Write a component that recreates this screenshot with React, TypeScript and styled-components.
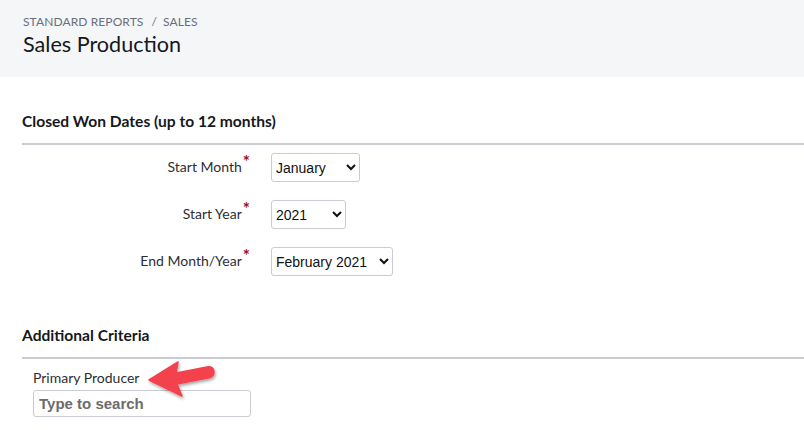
import React from 'react';
import styled, { createGlobalStyle } from 'styled-components';

const GlobalStyle = createGlobalStyle`
  html, body {
    margin: 0;
    padding: 0;
    background: #ffffff;
    font-family: Lato, "Noto Sans", sans-serif;
    color: #1f2328;
  }
`;

const Page = styled.div`
  width: 804px;
  height: 430px;
  overflow: hidden;
`;

const Header = styled.header`
  background: #f5f6f8;
  height: 77px;
  box-sizing: border-box;
  padding: 14px 23px 0;
`;

const Breadcrumb = styled.div`
  font-size: 12px;
  line-height: 15px;
  color: #6b6f78;
  text-transform: uppercase;
  letter-spacing: 0.1px;

  span {
    margin: 0 6px 0 8px;
  }
`;

const Title = styled.h1`
  margin: 2px 0 0;
  font-size: 21.6px;
  font-weight: 400;
  line-height: 26px;
  color: #15181c;
`;

const Section = styled.section<{ $top: number }>`
  margin-top: ${({ $top }) => $top}px;
  padding-left: 22px;
`;

const SectionTitle = styled.h2`
  margin: 0;
  font-size: 15.6px;
  font-weight: 700;
  line-height: 20px;
  color: #15181c;
  padding-bottom: 12px;
  border-bottom: 2px solid #c9ccd1;
`;

const FormGrid = styled.div`
  display: grid;
  grid-template-columns: 228px auto;
  column-gap: 21px;
  row-gap: 18px;
  padding-top: 8px;
  justify-items: start;
  align-items: center;
`;

const Label = styled.label`
  justify-self: end;
  font-size: 14px;
  color: #2b2f35;
  position: relative;
  top: -1px;
`;

const Req = styled.sup`
  color: #a10d0d;
  font-size: 17px;
  font-weight: 700;
  line-height: 0;
  margin-left: 1px;
  position: relative;
  top: 2px;
`;

const Select = styled.select<{ $w: number }>`
  width: ${({ $w }) => $w}px;
  height: 29px;
  box-sizing: border-box;
  border: 1px solid #c8ccd2;
  border-radius: 3px;
  background: #fff;
  font-family: "Liberation Sans", Arial, sans-serif;
  font-size: 14px;
  color: #111;
  padding: 0;
`;

const Field = styled.div`
  padding: 10px 0 0 11px;
  position: relative;
`;

const FieldLabel = styled.div`
  font-size: 14px;
  line-height: 18px;
  color: #2b2f35;
  margin-bottom: 3px;
`;

const SearchInput = styled.input`
  width: 218px;
  height: 27px;
  box-sizing: border-box;
  border: 1px solid #c8ccd2;
  border-radius: 3px;
  padding: 0 5px;
  font-family: "Liberation Sans", Arial, sans-serif;
  font-size: 15px;
  font-weight: 700;

  &::placeholder {
    color: #6c6c6c;
    opacity: 1;
  }
`;

const Arrow = styled.svg`
  position: absolute;
  left: 125px;
  top: 2px;
  overflow: visible;
`;

const App: React.FC = () => (
  <Page>
    <GlobalStyle />
    <Header>
      <Breadcrumb>
        Standard Reports<span>/</span>Sales
      </Breadcrumb>
      <Title>Sales Production</Title>
    </Header>

    <Section $top={34}>
      <SectionTitle>Closed Won Dates (up to 12 months)</SectionTitle>
      <FormGrid>
        <Label>
          Start Month<Req>*</Req>
        </Label>
        <Select $w={89} defaultValue="January">
          <option>January</option>
          <option>February</option>
        </Select>

        <Label>
          Start Year<Req>*</Req>
        </Label>
        <Select $w={75} defaultValue="2021">
          <option>2021</option>
          <option>2020</option>
        </Select>

        <Label>
          End Month/Year<Req>*</Req>
        </Label>
        <Select $w={122} defaultValue="February 2021">
          <option>February 2021</option>
          <option>January 2021</option>
        </Select>
      </FormGrid>
    </Section>

    <Section $top={49}>
      <SectionTitle>Additional Criteria</SectionTitle>
      <Field>
        <FieldLabel>Primary Producer</FieldLabel>
        <SearchInput placeholder="Type to search" />
        <Arrow width="80" height="40" viewBox="0 0 80 40">
          <defs>
            <filter id="shadow" x="-20%" y="-30%" width="140%" height="160%">
              <feDropShadow dx="1" dy="2" stdDeviation="1.6" floodColor="#000" floodOpacity="0.35" />
            </filter>
          </defs>
          <g filter="url(#shadow)">
            <path
              d="M2 19 L31 1 L29 12 L60 6 Q67 5 67 11 Q67 16 61 17 L30 23 L35 35 Z"
              fill="#f3434c"
              strokeLinejoin="round"
              stroke="#f3434c"
              strokeWidth="1.5"
            />
          </g>
        </Arrow>
      </Field>
    </Section>
  </Page>
);

export default App;
